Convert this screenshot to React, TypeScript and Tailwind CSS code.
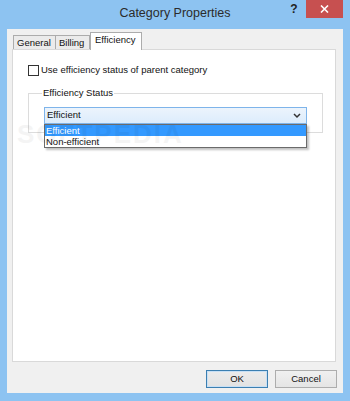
import React from "react";

const ui = { fontFamily: '"Liberation Sans", Arial, sans-serif' };

export default function App() {
  return (
    <div
      className="w-[350px] h-[401px] bg-[#8dc3f1] flex flex-col overflow-hidden text-[#000]"
      style={ui}
    >
      {/* Title bar */}
      <div className="h-[29px] shrink-0 grid grid-cols-[1fr_auto_1fr]">
        <div />
        <div className="pt-[5px] text-[12.5px] text-[#2b2b2b] leading-[16px]">Category Properties</div>
        <div className="flex justify-end items-start pr-[7px]">
          <div className="w-[14px] pt-[2px] text-[12px] font-bold text-[#222] leading-[14px] text-center mr-[5px]">?</div>
          <div className="w-[37px] h-[18px] bg-[#c75050] flex items-center justify-center">
            <svg width="9" height="8" viewBox="0 0 9 8">
              <path d="M1 0.5 L8 7.5 M8 0.5 L1 7.5" stroke="#fff" strokeWidth="1.6" />
            </svg>
          </div>
        </div>
      </div>

      {/* Client area */}
      <div className="flex-1 mx-[7px] mb-[8px] bg-[#f0f0f0] flex flex-col pl-[5px] pr-[7px] relative">
        {/* Tabs */}
        <div className="h-[17px] mt-[3px] flex items-end pl-[1px] shrink-0">
          <div className="h-[14px] w-[43px] border border-b-0 border-[#acacac] bg-[#ebebeb] text-[9.5px] leading-[13px] px-[3px] text-[#111]">
            General
          </div>
          <div className="h-[14px] w-[34px] border border-b-0 border-l-0 border-[#acacac] bg-[#ebebeb] text-[9.5px] leading-[13px] px-[3px] text-[#111]">
            Billing
          </div>
          <div className="h-[18px] w-[52px] border border-b-0 border-[#acacac] bg-white text-[9.5px] leading-[14px] px-[4px] text-[#111] -mb-[1px] relative z-10">
            Efficiency
          </div>
        </div>

        {/* Panel */}
        <div className="h-[313px] border border-[#d9d9d9] bg-white pt-[14px] pl-[15px] pr-[12px]">
          <div className="flex items-center h-[13px]">
            <div className="w-[11px] h-[11px] border border-[#333] bg-white" />
            <span className="ml-[2px] text-[9.5px] text-[#111]">Use efficiency status of parent category</span>
          </div>

          {/* Group box */}
          <fieldset className="mt-[10px] border border-[#dcdcdc] h-[46px] px-[15px] min-w-0">
            <legend className="ml-[-2px] px-[1px] text-[9.5px] leading-[12px] text-[#111]">Efficiency Status</legend>
            <div className="relative mt-[8px]">
              <div className="h-[17px] border border-[#7eb4ea] bg-gradient-to-b from-[#ecf4fc] to-[#dcecfc] flex items-center pl-[2px] pr-[5px]">
                <span className="flex-1 text-[9.5px] text-[#111]">Efficient</span>
                <svg width="8" height="6" viewBox="0 0 8 6">
                  <path d="M1 1 L4 4 L7 1" stroke="#333" strokeWidth="1.5" fill="none" />
                </svg>
              </div>
              <div className="absolute left-0 right-0 top-[17px] border border-[#6b6b6b] bg-white shadow-[2px_2px_2px_rgba(0,0,0,0.25)] z-20">
                <div className="h-[11px] bg-[#3399ff] text-white text-[9.5px] leading-[11px] pl-[1px]">Efficient</div>
                <div className="h-[11px] text-[#111] text-[9.5px] leading-[11px] pl-[1px]">Non-efficient</div>
              </div>
            </div>
          </fieldset>
        </div>

        {/* Buttons */}
        <div className="flex justify-end gap-[7px] mt-[8px] -mr-[1px]">
          <button className="w-[62px] h-[18px] border border-[#3c7fb1] bg-gradient-to-b from-[#ececec] to-[#e2e2e2] text-[9.5px] text-[#111] leading-[14px] shadow-[inset_0_0_0_1px_#c8e0f5]">
            OK
          </button>
          <button className="w-[62px] h-[18px] border border-[#adadad] bg-gradient-to-b from-[#f0f0f0] to-[#e5e5e5] text-[9.5px] text-[#111] leading-[14px]">
            Cancel
          </button>
        </div>

        {/* watermark */}
        <div className="absolute left-[10px] top-[86px] text-[26px] font-bold tracking-[2px] text-[#000] opacity-[0.04] pointer-events-none z-30">
          SOFTPEDIA
        </div>
      </div>
    </div>
  );
}
